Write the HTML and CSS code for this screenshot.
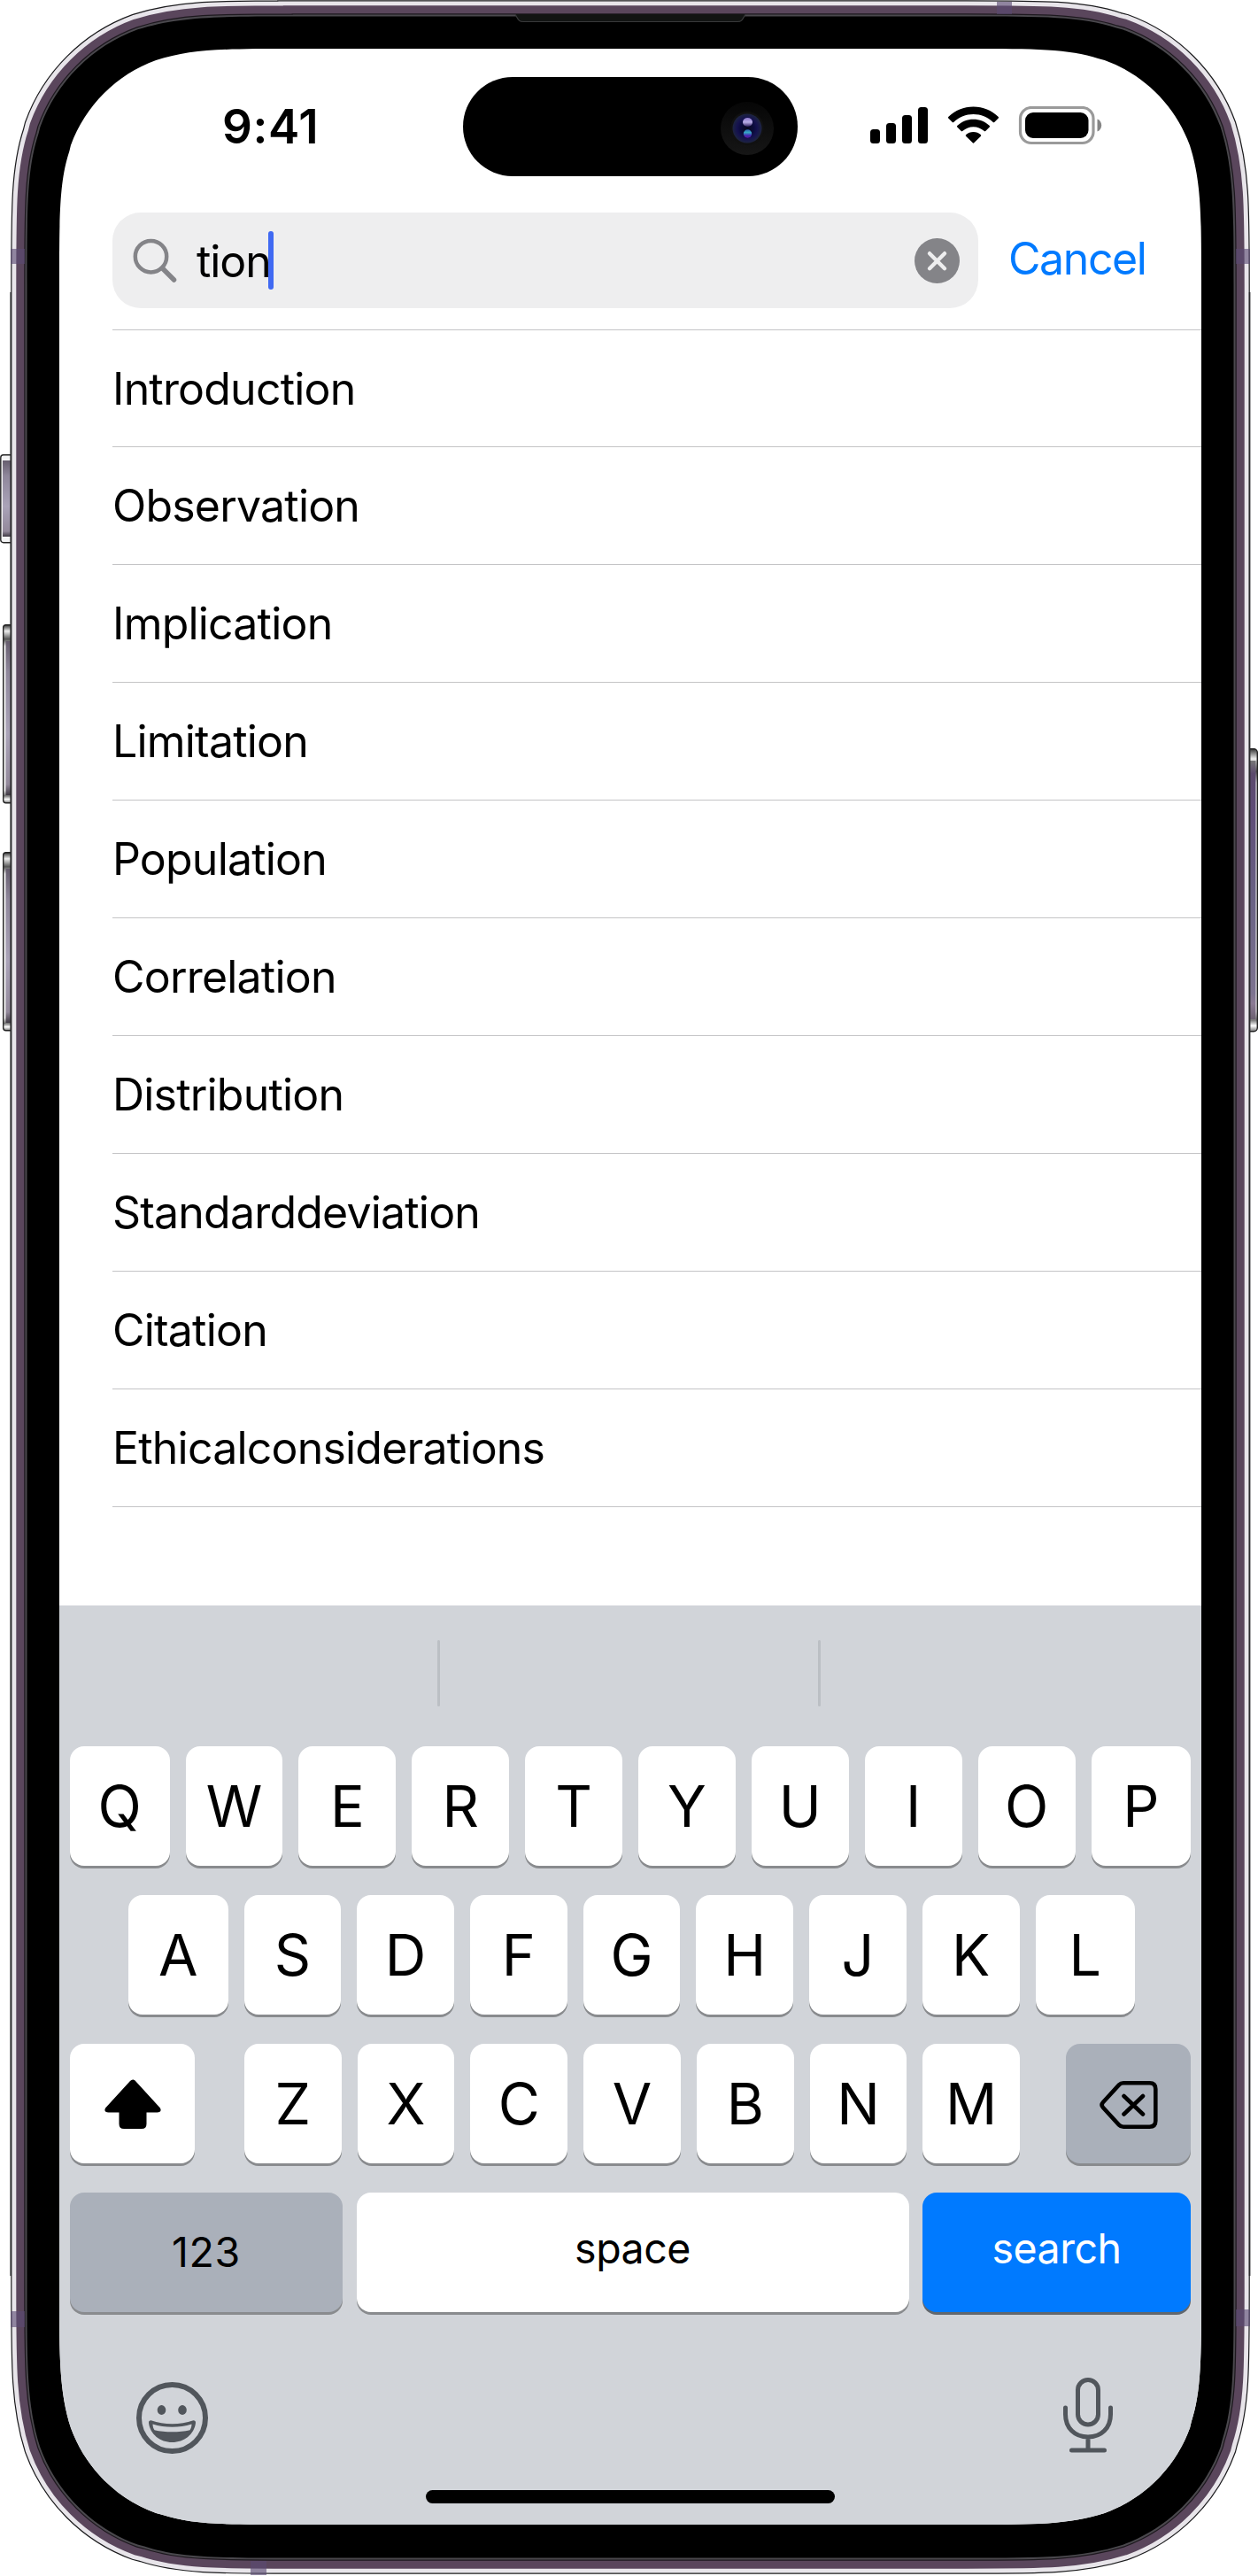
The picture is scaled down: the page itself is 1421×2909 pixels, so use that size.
FILE: index.html
```html
<!DOCTYPE html>
<html lang="en">
<head>
<meta charset="utf-8">
<title>Search</title>
<link rel="stylesheet" href="styles.css">
</head>
<body>
<div class="device">
  <svg class="frame" width="1421" height="2909" viewBox="0 0 1421 2909" aria-hidden="true">
    <defs>
      <path id="body" d="M333.1,18.5h757.8c87.2,0 130.7,0 170,13l7.6,1.9c51.2,18.6 91.6,59 110.2,110.2c14.8,46.9 14.8,90.5 14.8,177.5v2264.8c0,87.2 0,130.7 -13,170l-1.9,7.6c-18.6,51.2 -59,91.6 -110.2,110.2c-46.9,14.8 -90.5,14.8 -177.5,14.8h-757.8c-87.2,0 -130.7,0 -170,-13l-7.6,-1.9c-51.2,-18.6 -91.6,-59 -110.2,-110.2c-14.8,-46.9 -14.8,-90.5 -14.8,-177.5v-2264.8c0,-87.2 0,-130.7 13,-170l1.9,-7.6c18.6,-51.2 59,-91.6 110.2,-110.2c46.9,-14.8 90.5,-14.8 177.5,-14.8z"/>
      <linearGradient id="btn" x2="0" y2="1">
        <stop offset="0" stop-color="#665d6e"/><stop offset=".2" stop-color="#8f879b"/><stop offset=".6" stop-color="#aaa3b8"/><stop offset=".93" stop-color="#93899b"/><stop offset="1" stop-color="#403a44"/>
      </linearGradient>
      <linearGradient id="cap" x2="0" y2="1">
        <stop offset="0" stop-color="#333"/><stop offset=".035" stop-color="#eee"/><stop offset=".08" stop-color="#555"/><stop offset=".12" stop-color="#eee"/><stop offset=".93" stop-color="#eee"/><stop offset=".96" stop-color="#777"/><stop offset=".98" stop-color="#fff"/><stop offset="1" stop-color="#777"/>
      </linearGradient>
      <linearGradient id="power" x2="0" y2="1">
        <stop offset="0" stop-color="#777"/><stop offset=".05" stop-color="#5b496d"/><stop offset=".2" stop-color="#5f4d78"/><stop offset=".55" stop-color="#6a6385"/><stop offset=".9" stop-color="#7d7390"/><stop offset=".94" stop-color="#8b7a94"/><stop offset="1" stop-color="#6b6070"/>
      </linearGradient>
    </defs>
    <g stroke="#222" stroke-width="1.4">
      <rect x=".8" y="513.7" width="14" height="99" rx="3" fill="#f4f4f5"/>
      <rect x="3.7" y="705.7" width="12" height="201" rx="3" fill="url(#cap)"/>
      <rect x="3.7" y="962.7" width="12" height="201" rx="3" fill="url(#cap)"/>
      <rect x="1405" y="845.7" width="15.3" height="319" rx="4" fill="url(#cap)"/>
    </g>
    <rect x="3" y="520" width="10" height="86" fill="url(#btn)"/>
    <rect x="6.5" y="724" width="7" height="174" fill="url(#btn)"/>
    <rect x="6.5" y="981" width="7" height="174" fill="url(#btn)"/>
    <rect x="1411" y="859" width="7.5" height="292" fill="url(#power)"/>
    <g fill="none">
      <use href="#body" stroke="#1c1c1e" stroke-width="36.6"/>
      <use href="#body" stroke="#e8e5ea" stroke-width="34.2"/>
      <use href="#body" stroke="#5a465c" stroke-width="24.4"/>
      <use href="#body" stroke="#1d181e" stroke-width="6.5"/>
      <use href="#body" stroke="#4a484d" stroke-width="4"/>
    </g>
    <use href="#body" fill="#000"/>
    <path d="M12.2,330V2570M1411.6,330V2570" stroke="#2b2b2d" stroke-width="1.6"/>
    <path d="M582,16c3,4 3,9 9,9h242c6,0 6,-5 9,-9z" fill="#121413"/>
    <path d="M582,16.500c3,4 3,8 9,8h242c6,0 6,-4 9,-8" fill="none" stroke="#38393a" stroke-width="1.2"/>
    <g fill="#5a4a72" fill-opacity=".62">
      <rect x="12" y="281" width="16" height="17"/>
      <rect x="1396" y="281" width="16" height="17"/>
      <rect x="12" y="2610" width="16" height="18"/>
      <rect x="1396" y="2608" width="16" height="19"/>
      <rect x="1126" y="2" width="17" height="14"/>
      <rect x="283" y="2892" width="18" height="16"/>
    </g>
  </svg>

  <main class="screen">
    <header class="status">
      <span class="time">9:41</span>
      <svg class="island" width="378" height="112" viewBox="0 0 378 112" aria-hidden="true">
        <defs>
          <radialGradient id="lens"><stop offset="0" stop-color="#080a1c"/><stop offset=".45" stop-color="#0b0b3c"/><stop offset=".7" stop-color="#15124f"/><stop offset="1" stop-color="#1d2440"/></radialGradient>
          <linearGradient id="ring" x2="0" y2="1"><stop offset="0" stop-color="#060606"/><stop offset="1" stop-color="#161616"/></linearGradient>
          <linearGradient id="glint" x2="0" y2="1"><stop offset="0" stop-color="#8c78cc"/><stop offset=".5" stop-color="#b9aee6"/><stop offset="1" stop-color="#2c1c5c"/></linearGradient>
          <linearGradient id="glint2" x2="0" y2="1"><stop offset="0" stop-color="#2b5fb0"/><stop offset=".35" stop-color="#36a9c4"/><stop offset=".7" stop-color="#4429b5"/><stop offset="1" stop-color="#5b149c"/></linearGradient>
        </defs>
        <rect width="378" height="112" rx="56"/>
        <circle cx="321" cy="58" r="30" fill="url(#ring)"/>
        <circle cx="321" cy="58" r="19" fill="#111"/>
        <circle cx="321" cy="58" r="16.500" fill="url(#lens)"/>
        <ellipse cx="321.500" cy="51" rx="5.500" ry="5" fill="url(#glint)"/>
        <circle cx="321.500" cy="64" r="4.700" fill="url(#glint2)"/>
      </svg>
      <svg class="indicators" width="262" height="44" viewBox="0 0 262 44" aria-label="Signal, Wi-Fi and battery">
        <rect x="0" y="26" width="11" height="16" rx="3.500"/>
        <rect x="18" y="19" width="11" height="23" rx="3.500"/>
        <rect x="36" y="10" width="11" height="32" rx="3.500"/>
        <rect x="54" y="1" width="11" height="41" rx="3.500"/>
        <path d="M116.500,0.500c11,0 20.500,4.200 28,11.300c.7,.7 .7,1.300 0,2l-4,4c-.7,.7-1.300,.7-2,0c-6-5.600-13.500-8.800-22-8.800s-16,3.200-22,8.800c-.7,.7-1.300,.7-2,0l-4-4c-.7-.7-.7-1.300 0-2c7.500-7.100 17-11.300 28-11.300z"/>
        <path d="M116.500,14.800c7,0 13,2.600 18,7c.7,.7 .7,1.300 0,2l-4,4c-.7,.7-1.300,.7-2,0c-3.400-2.900-7.400-4.600-12-4.600s-8.600,1.700-12,4.600c-.7,.7-1.300,.7-2,0l-4-4c-.7-.7-.7-1.300 0-2c5-4.400 11-7 18-7z"/>
        <path d="M116.500,29c3.300,0 6,1.100 8.200,2.900c.7,.6 .7,1.300 0,2l-7.200,7.200c-.7,.7-1.300,.7-2,0l-7.200-7.200c-.7-.7-.7-1.400 0-2c2.200-1.800 4.900-2.900 8.200-2.900z"/>
        <rect x="169.500" y="1.500" width="82.500" height="40" rx="12.500" fill="none" stroke="#9a9a9a" stroke-width="3.200"/>
        <rect x="175" y="7" width="71.500" height="29" rx="9"/>
        <path d="M256.500,14.500c3,1 4.700,4 4.700,7s-1.700,6-4.700,7z" fill="#858585"/>
      </svg>
    </header>

    <div class="search">
      <div class="field">
        <svg class="glass" width="50" height="50" viewBox="0 0 50 50" fill="none" stroke="#848488" stroke-width="4.500" aria-hidden="true">
          <circle cx="20.500" cy="20.700" r="17.700"/>
          <path d="M33.500,34L46.500,47" stroke-width="5.500" stroke-linecap="round"/>
        </svg>
        <span class="query">tion</span><span class="caret"></span>
        <svg class="clear" width="51" height="51" viewBox="0 0 51 51" aria-hidden="true">
          <circle cx="25.500" cy="25.500" r="25.500" fill="#848488"/>
          <path d="M17,17.200L34,34.200M34,17.200L17,34.200" stroke="#eeeeef" stroke-width="4.400" stroke-linecap="round"/>
        </svg>
      </div>
      <span class="cancel">Cancel</span>
    </div>

    <ul class="results">
      <li><span>Introduction</span></li>
      <li><span>Observation</span></li>
      <li><span>Implication</span></li>
      <li><span>Limitation</span></li>
      <li><span>Population</span></li>
      <li><span>Correlation</span></li>
      <li><span>Distribution</span></li>
      <li><span>Standarddeviation</span></li>
      <li><span>Citation</span></li>
      <li><span>Ethicalconsiderations</span></li>
    </ul>

    <section class="keyboard">
      <div class="suggestions"><i></i><i></i></div>
      <div class="row">
        <b class="key edge">Q</b><b class="key">W</b><b class="key">E</b><b class="key">R</b><b class="key">T</b><b class="key">Y</b><b class="key">U</b><b class="key">I</b><b class="key">O</b><b class="key edge">P</b>
      </div>
      <div class="row home-row">
        <b class="key edge">A</b><b class="key">S</b><b class="key">D</b><b class="key">F</b><b class="key">G</b><b class="key">H</b><b class="key">J</b><b class="key">K</b><b class="key edge">L</b>
      </div>
      <div class="row">
        <b class="key shift">
          <svg width="64" height="62" viewBox="0 0 64 62" aria-hidden="true"><path d="M29,5c1.800-2 4.200-2 6,0L62,34.500c3,3.200 1.500,6-2.500,6H47.500V53.500q0,5.500-5.500,5.500H22q-5.500,0-5.500-5.500V40.500H4.500c-4,0-5.500-2.800-2.500-6z"/></svg>
        </b>
        <b class="key">Z</b><b class="key">X</b><b class="key">C</b><b class="key">V</b><b class="key">B</b><b class="key">N</b><b class="key">M</b>
        <b class="key delete">
          <svg width="66" height="54" viewBox="0 0 66 54" fill="none" stroke="#000" stroke-width="4.600" stroke-linecap="round" stroke-linejoin="round" aria-hidden="true"><path d="M27,2.300H56.500Q63.300,2.300 63.300,9V45Q63.300,51.700 56.500,51.700H27Q24,51.700 22,49.600L4,30Q1.200,27 4,24L22,4.400Q24,2.300 27,2.300zM27.500,17L49,37.500M49,17L27.500,37.500"/></svg>
        </b>
      </div>
      <div class="row wide">
        <b class="key numbers"><span>123</span></b><b class="key space"><span>space</span></b><b class="key go"><span>search</span></b>
      </div>
      <div class="dock">
        <svg width="81" height="81" viewBox="0 0 81 81" fill="#51565c" aria-hidden="true">
          <circle cx="40.500" cy="40.500" r="37.500" fill="none" stroke="#51565c" stroke-width="6"/>
          <ellipse cx="28.500" cy="31.500" rx="4.800" ry="5.400"/><ellipse cx="52" cy="31.500" rx="4.800" ry="5.400"/>
          <path d="M16.500,43.200c8,2.800 15.500,4 24,4s16-1.200 24-4c1.600,0 2.600,1 2.500,2.800C65.500,59 54,68 40.500,68S15.500,59 14,46c-.1-1.800 .9-2.800 2.500-2.800z"/>
          <path d="M18.500,47.500c7,2.200 14.500,3.200 22,3.200s15-1 22-3.200c0,2.500-.7,5-2,6.700c-6,1.400-13,2.100-20,2.100s-14-.7-20-2.100c-1.300-1.700-2-4.200-2-6.700z" fill="#d1d4d9"/>
        </svg>
        <svg width="56" height="85" viewBox="0 0 56 85" fill="none" stroke="#51565c" stroke-width="5" stroke-linecap="round" aria-hidden="true">
          <rect x="16.500" y="2.500" width="23" height="50.500" rx="11.500"/>
          <path d="M2.500,34V41.500C2.500,57 13,67 28,67S53.500,57 53.500,41.500V34M28,67V82M9.500,82H46.500"/>
        </svg>
      </div>
      <div class="home"></div>
    </section>
  </main>
</div>
</body>
</html>
```
FILE: styles.css
```css
* { box-sizing: border-box; }
body { margin: 0; background: #fff; font-family: Inter, "Liberation Sans", sans-serif; color: #000; }
.device { position: relative; width: 1421px; height: 2909px; padding: 55px 64px 58px 67px; overflow: hidden; }
.frame { position: absolute; left: 0; top: 0; }

.screen {
  position: relative;
  display: flex;
  flex-direction: column;
  width: 1290px;
  height: 2796px;
  background: #fff;
  clip-path: path("M264.5,0h761c76.2,0 114.2,0 148.6,11.3l6.6,1.6c44.8,16.3 80,51.5 96.3,96.3c13,41 13,79.1 13,155.3v2267c0,76.2 0,114.2 -11.3,148.6l-1.6,6.6c-16.3,44.8 -51.5,80 -96.3,96.3c-41,13 -79.1,13 -155.3,13h-761c-76.2,0 -114.2,0 -148.6,-11.3l-6.6,-1.6c-44.8,-16.3 -80,-51.5 -96.3,-96.3c-13,-41 -13,-79.1 -13,-155.3v-2267c0,-76.2 0,-114.2 11.3,-148.6l1.6,-6.6c16.3,-44.8 51.5,-80 96.3,-96.3c41,-13 79.1,-13 155.3,-13z");
}

.status { display: flex; height: 185px; padding: 32px 112px 0 184px; }
.time { width: 272px; padding-top: 24px; font-size: 53px; line-height: 64px; font-weight: 600; letter-spacing: .6px; }
.island { flex: none; }
.indicators { margin: 33px 0 0 auto; }

.search { display: flex; align-items: center; height: 108px; padding-left: 60px; }
.field { display: flex; align-items: center; width: 978px; height: 108px; padding: 0 21px 0 23px; border-radius: 32px; background: #eeeeef; }
.glass { flex: none; margin-top: -1px; }
.query { margin: 2px 0 0 22px; font-size: 50px; line-height: 60px; letter-spacing: -1.1px; }
.caret { width: 6px; height: 66px; margin-left: -3px; border-radius: 3px; background: #4069f2; }
.clear { margin-left: auto; }
.cancel { margin: -4px 0 0 34px; font-size: 50px; line-height: 60px; letter-spacing: -1.4px; color: #007aff; }

.results { list-style: none; margin: 24px 0 0 60px; padding: 0; border-top: 1px solid #c4c4c6; font-size: 50px; letter-spacing: -.8px; }
.results li { display: flex; align-items: center; height: 133px; border-bottom: 1px solid #c4c4c6; }
.results li:first-child { height: 132px; }

.keyboard { display: flex; flex-direction: column; height: 1038px; margin-top: auto; padding: 0 12px; background: #d1d4d9; }
.suggestions { display: flex; justify-content: space-between; height: 159px; padding: 39px 418px 0 415px; }
.suggestions i { width: 3px; height: 75px; border-radius: 2px; background: #bbbfc4; }
.row { display: flex; gap: 18px; height: 135px; margin-bottom: 33px; }
.home-row { padding: 0 63px 0 66px; }
.wide { gap: 15.500px; }
.key { display: flex; flex: 1 1 0; align-items: center; justify-content: center; border-radius: 16px; background: #fff; box-shadow: 0 3px 0 #898b8e; font-size: 64.500px; font-weight: 400; }
.edge { flex: 0 0 112.500px; }
.shift { flex: 0 0 141px; margin-right: 38px; }
.delete { flex: 0 0 141px; margin-left: 34px; background: #aab0ba; }
.shift svg { margin-top: 1px; }
.delete svg { margin-top: 3px; }
.numbers, .space, .go { font-size: 46.500px; letter-spacing: -.5px; }
.numbers { flex: 0 0 308px; background: #aab0ba; letter-spacing: .6px; }
.go { flex: 0 0 303px; background: #007aff; color: #fff; box-shadow: 0 3px 0 #62676d; }
.numbers span { margin-top: -2px; }
.space span, .go span { margin-top: -9px; }
.dock { display: flex; justify-content: space-between; align-items: flex-start; height: 168px; padding: 41px 88px 0 75px; }
.dock svg:first-child { margin-top: 5px; }
.home { width: 462px; height: 15px; margin-left: 402px; border-radius: 8px; background: #000; }
```
